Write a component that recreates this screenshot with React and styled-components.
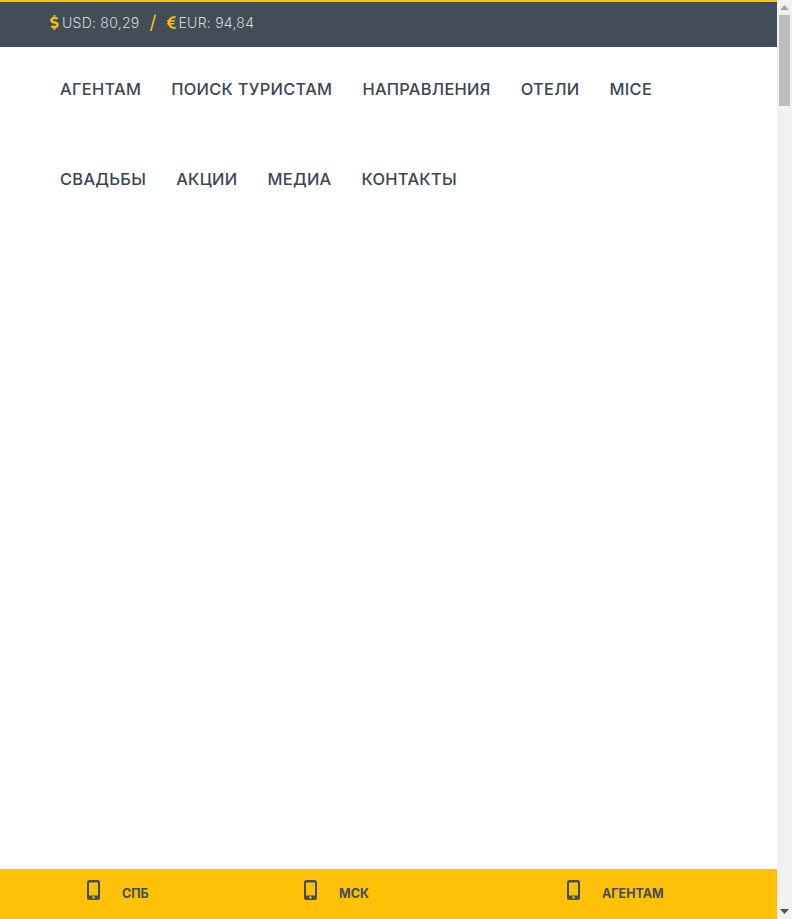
import React from 'react'
import styled, { createGlobalStyle } from 'styled-components'
import { FaDollarSign, FaEuroSign } from 'react-icons/fa'

const GlobalStyle = createGlobalStyle`
  html, body {
    margin: 0;
    height: 100%;
    overflow: hidden;
    background: #fff;
  }
  #root {
    height: 100%;
  }
`

const Page = styled.div`
  display: flex;
  height: 919px;
  font-family: Inter, "Open Sans", sans-serif;
`

const Main = styled.div`
  flex: 1;
  min-width: 0;
  display: flex;
  flex-direction: column;
`

const TopBar = styled.div`
  height: 40px;
  border-top: 2px solid #ffc107;
  background: #434d58;
  padding: 0 0 5px 50px;
  display: flex;
  align-items: center;
  color: #d4d7da;
  font-size: 14px;
  font-weight: 300;
  letter-spacing: 0.25px;
`

const Rate = styled.span`
  display: flex;
  align-items: center;
  gap: 3px;
  svg {
    color: #ffc107;
    width: 9px;
    height: 15px;
  }
`

const Slash = styled.span`
  color: #ffc107;
  font-size: 19px;
  font-weight: 400;
  margin: 0 10px;
`

const Nav = styled.nav`
  display: flex;
  flex-wrap: wrap;
  row-gap: 6px;
  padding: 0 60px;
  column-gap: 30px;
`

const NavItem = styled.a`
  height: 84px;
  display: flex;
  align-items: center;
  color: #3b4652;
  font-size: 16.4px;
  font-weight: 500;
  letter-spacing: 0.3px;
`

const Spacer = styled.div`
  flex: 1;
`

const BottomBar = styled.div`
  height: 48px;
  background: #ffc107;
  padding: 0 0 2px 87px;
  display: grid;
  grid-template-columns: 217px 263px 1fr;
  align-items: center;
`

const Phone = styled.div`
  display: flex;
  align-items: center;
  gap: 22px;
  color: #434d58;
  font-size: 12.5px;
  font-weight: 700;
  svg {
    margin: -3px 0 3px;
  }
`

const Scrollbar = styled.div`
  width: 15px;
  background: #f1f1f1;
  display: flex;
  flex-direction: column;
  align-items: center;
  justify-content: space-between;
`

const Thumb = styled.div`
  width: 11px;
  height: 91px;
  background: #bdbdbd;
`

const ArrowButton = styled.div`
  height: 15px;
  display: flex;
  align-items: center;
  justify-content: center;
`

const UpperTrack = styled.div`
  display: flex;
  flex-direction: column;
  align-items: center;
`

const PhoneIcon = () => (
  <svg width="13" height="20" viewBox="0 0 13 20" fill="#434d58">
    <path fillRule="evenodd" d="M2.500 0h8A2.500 2.500 0 0 1 13 2.500v15a2.500 2.500 0 0 1-2.500 2.500h-8A2.500 2.500 0 0 1 0 17.500v-15A2.500 2.500 0 0 1 2.500 0zM2 2.500v13h9v-13zm4.500 13.800a1.200 1.200 0 1 0 0 2.400 1.200 1.200 0 0 0 0-2.400z" />
  </svg>
)

const Arrow = ({ down, color }) => (
  <svg width="9" height="5" viewBox="0 0 9 5" fill={color}>
    <path d={down ? 'M0 0h9L4.500 5z' : 'M4.500 0L9 5H0z'} />
  </svg>
)

const navItems = ['АГЕНТАМ', 'ПОИСК ТУРИСТАМ', 'НАПРАВЛЕНИЯ', 'ОТЕЛИ', 'MICE', 'СВАДЬБЫ', 'АКЦИИ', 'МЕДИА', 'КОНТАКТЫ']
const phones = ['СПБ', 'МСК', 'АГЕНТАМ']

const App = () => {
  return (
    <Page>
      <GlobalStyle />
      <Main>
        <TopBar>
          <Rate><FaDollarSign /> USD: 80,29</Rate>
          <Slash>/</Slash>
          <Rate><FaEuroSign /> EUR: 94,84</Rate>
        </TopBar>
        <Nav>
          {navItems.map((item) => (
            <NavItem key={item}>{item}</NavItem>
          ))}
        </Nav>
        <Spacer />
        <BottomBar>
          {phones.map((name) => (
            <Phone key={name}>
              <PhoneIcon />
              {name}
            </Phone>
          ))}
        </BottomBar>
      </Main>
      <Scrollbar>
        <UpperTrack>
          <ArrowButton><Arrow color="#a3a3a3" /></ArrowButton>
          <Thumb />
        </UpperTrack>
        <ArrowButton><Arrow down color="#505050" /></ArrowButton>
      </Scrollbar>
    </Page>
  )
}

export default App
